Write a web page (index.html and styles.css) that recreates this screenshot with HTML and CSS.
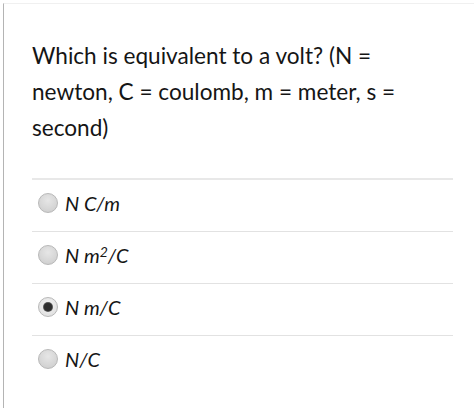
FILE: index.html
```html
<!DOCTYPE html>
<html>
<head>
<meta charset="utf-8">
<link rel="stylesheet" href="styles.css">
</head>
<body>
<div class="frame">
  <div class="card">
    <p class="question">Which is equivalent to a volt? (N = newton, C = coulomb, m = meter, s = second)</p>
    <ul class="options">
      <li class="option"><span class="radio"></span><span class="label">N C/m</span></li>
      <li class="option"><span class="radio"></span><span class="label">N m<sup>2</sup>/C</span></li>
      <li class="option"><span class="radio checked"></span><span class="label">N m/C</span></li>
      <li class="option"><span class="radio"></span><span class="label">N/C</span></li>
    </ul>
  </div>
</div>
</body>
</html>
```

FILE: styles.css
```css
html, body {
  margin: 0;
  padding: 0;
  background: #fff;
}
body {
  width: 474px;
  height: 408px;
  overflow: hidden;
  font-family: Lato, "Open Sans", sans-serif;
  color: #151515;
}
.frame {
  margin: 3px 0 0 3px;
  height: 405px;
  border-left: 1px solid #b4b4b4;
  border-top: 1px solid #f0f0f0;
}
.card {
  padding: 34px 21px 0 28px;
}
.question {
  margin: 0;
  font-size: 22.6px;
  line-height: 36px;
  width: 410px;
}
.options {
  list-style: none;
  margin: 32px 0 0 0;
  padding: 0;
}
.option {
  display: flex;
  align-items: center;
  border-top: 1px solid #e2e2e2;
  padding: 13px 0 18px 6px;
  height: 20px;
}
.option:first-child {
  border-top-width: 2px;
  border-top-color: #e8e8e8;
}
.radio {
  width: 18px;
  height: 18px;
  border-radius: 50%;
  border: 1px solid #b8b8b8;
  background: radial-gradient(circle at 50% 35%, #e6e6e6 0%, #d6d6d6 60%, #cacaca 100%);
  box-sizing: content-box;
  flex: none;
  position: relative;
}
.radio.checked {
  background: radial-gradient(circle at 50% 40%, #f4f4f4 0%, #e0e0e0 80%, #d2d2d2 100%);
}
.radio.checked::after {
  content: "";
  position: absolute;
  left: 5px;
  top: 5px;
  width: 8px;
  height: 8px;
  border-radius: 50%;
  background: #2e2e2e;
  box-shadow: 0 0 0 1px #555;
}
.label {
  margin-left: 7px;
  font-style: italic;
  font-size: 20px;
  line-height: 20px;
}
.label sup {
  font-size: 14px;
  line-height: 0;
  vertical-align: 6px;
}
```
